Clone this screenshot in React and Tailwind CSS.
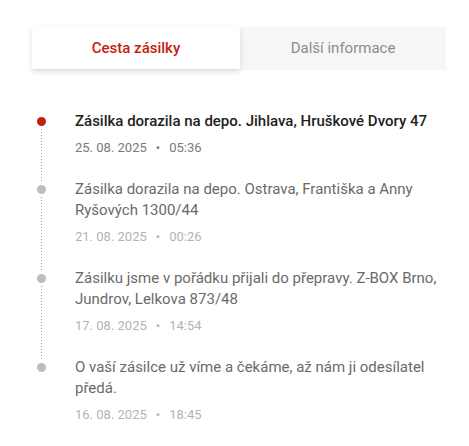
import React from "react"

const events = [
  {
    id: 1,
    text: "Zásilka dorazila na depo. Jihlava, Hruškové Dvory 47",
    date: "25. 08. 2025",
    time: "05:36",
    current: true,
  },
  {
    id: 2,
    text: "Zásilka dorazila na depo. Ostrava, Františka a Anny Ryšových 1300/44",
    date: "21. 08. 2025",
    time: "00:26",
  },
  {
    id: 3,
    text: "Zásilku jsme v pořádku přijali do přepravy. Z-BOX Brno, Jundrov, Lelkova 873/48",
    date: "17. 08. 2025",
    time: "14:54",
  },
  {
    id: 4,
    text: "O vaší zásilce už víme a čekáme, až nám ji odesílatel předá.",
    date: "16. 08. 2025",
    time: "18:45",
  },
]

export default function App() {
  return (
    <div
      className="w-[469px] h-[446px] bg-white pt-[27px] pl-[32px] pr-[23px]"
      style={{ fontFamily: "Roboto, 'Noto Sans', sans-serif" }}
    >
      {/* tabs */}
      <div className="flex h-[43px] bg-[#f6f6f6]">
        <button className="w-[208px] h-[42px] bg-white text-[15px] font-medium text-[#c5200e] shadow-[0_3px_6px_rgba(0,0,0,0.12)]">
          Cesta zásilky
        </button>
        <button className="flex-1 text-[15px] text-[#8c8c8c]">Další informace</button>
      </div>

      {/* timeline */}
      <div className="mt-[41px]">
        {events.map((ev, i) => {
          const last = i === events.length - 1
          return (
            <div key={ev.id} className="flex">
              <div className="w-[18px] flex flex-col items-center">
                <div
                  className={`mt-[6px] w-[9px] h-[9px] rounded-full shrink-0 ${
                    ev.current ? "bg-[#c5200e]" : "bg-[#bdbdbd]"
                  }`}
                />
                {!last && (
                  <div className="flex-1 w-px mt-[3px] mb-[-4px] bg-[repeating-linear-gradient(to_bottom,#9e9e9e_0_1px,transparent_1px_3px)]" />
                )}
              </div>
              <div className={`ml-[25px] flex-1 ${last ? "" : "pb-[21px]"}`}>
                <p
                  className={`text-[15px] leading-[21px] ${
                    ev.current ? "font-medium text-[#222222]" : "text-[#6a6a6a]"
                  }`}
                >
                  {ev.text}
                </p>
                <p
                  className={`mt-[6px] text-[13px] leading-[20px] ${
                    ev.current ? "text-[#7a7a7a]" : "text-[#b4b4b4]"
                  }`}
                >
                  {ev.date}
                  <span className="mx-[9px]">•</span>
                  {ev.time}
                </p>
              </div>
            </div>
          )
        })}
      </div>
    </div>
  )
}
